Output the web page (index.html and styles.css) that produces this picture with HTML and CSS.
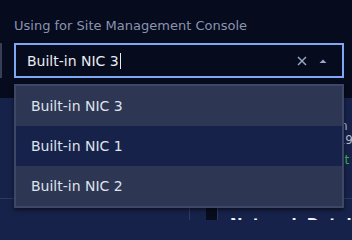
FILE: index.html
```html
<!DOCTYPE html>
<html>
<head>
<meta charset="utf-8">
<link rel="stylesheet" href="styles.css">
</head>
<body>
<div class="app">
  <header class="top">
    <div class="form-row">
      <div class="stub"></div>
      <div class="field">
        <label class="label">Using for Site Management Console</label>
        <div class="select">
          <span class="value">Built-in NIC 3</span><span class="caret"></span>
          <span class="spacer"></span>
          <svg class="clear" width="10" height="10" viewBox="0 0 10 10"><path d="M1 1 L9 9 M9 1 L1 9" stroke="#9aa5c3" stroke-width="1.5" fill="none"/></svg>
          <svg class="arrow" width="8" height="4" viewBox="0 0 8 4"><polygon points="0.5,4 4,0.5 7.5,4" fill="#9aa5c3"/></svg>
        </div>
        <ul class="menu">
          <li class="item active">Built-in NIC 3</li>
          <li class="item">Built-in NIC 1</li>
          <li class="item active">Built-in NIC 2</li>
        </ul>
      </div>
    </div>
  </header>
  <main class="lower">
    <div class="info">
      <div class="line">Lin</div>
      <div class="line">219</div>
      <div class="line ok">Act</div>
    </div>
    <div class="divider"></div>
    <div class="cols">
      <div class="col col-a"><div class="block"></div></div>
      <div class="col col-b"><h2 class="heading">Network Details</h2></div>
    </div>
  </main>
</div>
</body>
</html>
```
FILE: styles.css
```css
html, body {
  margin: 0;
  padding: 0;
  height: 220px;
  overflow: hidden;
}
body {
  background: #17224a;
  font-family: "DejaVu Sans", sans-serif;
}
.app {
  width: 352px;
  height: 220px;
  overflow: hidden;
  display: flex;
  flex-direction: column;
}
.top {
  flex: none;
  height: 98px;
  box-sizing: border-box;
  background: #060b1d;
  padding: 18px 8px 0 0;
}
.form-row {
  display: flex;
  align-items: flex-end;
}
.stub {
  width: 2px;
  height: 35px;
  background: #363f57;
  margin-right: 12px;
  flex: none;
}
.field {
  flex: 1;
  position: relative;
  display: flex;
  flex-direction: column;
}
.label {
  font-size: 13px;
  line-height: 16px;
  color: #8a94b0;
  margin-bottom: 9px;
}
.select {
  height: 35px;
  box-sizing: border-box;
  border: 2px solid #80a7f2;
  background: #060b1d;
  display: flex;
  align-items: center;
  padding: 0 15px 0 11px;
}
.value {
  font-size: 14px;
  color: #e8ebf2;
}
.caret {
  width: 1px;
  height: 16px;
  background: #e8ebf2;
  margin-left: 1px;
}
.spacer {
  flex: 1;
}
.clear {
  margin-right: 12px;
}
.arrow {
  margin-top: 1px;
}
.menu {
  position: absolute;
  left: 0;
  right: 0;
  top: 66px;
  margin: 0;
  padding: 0;
  list-style: none;
  border: 2px solid #3d4868;
  background: #17224a;
  box-shadow: 0 2px 4px rgba(0, 0, 0, 0.55);
  z-index: 2;
}
.item {
  height: 40px;
  display: flex;
  align-items: center;
  padding-left: 15px;
  font-size: 14px;
  color: #dfe3ec;
}
.item.active {
  background: #2d3653;
}
.lower {
  flex: 1;
  min-height: 0;
  overflow: hidden;
  display: flex;
  flex-direction: column;
}
.info {
  flex: none;
  padding: 21px 0 0 330px;
  font-size: 12px;
  line-height: 14px;
  color: #b4bccf;
  white-space: nowrap;
}
.line.ok {
  margin-top: 6px;
  color: #3cb44a;
}
.divider {
  flex: none;
  height: 1px;
  background: #2d3963;
  margin-top: 31px;
}
.cols {
  flex: 1;
  min-height: 0;
  overflow: hidden;
  display: flex;
  padding-left: 189px;
}
.col {
  border-left: 1px solid #2d3963;
}
.col-a {
  width: 44px;
  display: flex;
  padding-left: 16px;
}
.block {
  width: 11px;
  background: #070d1f;
}
.col-b {
  padding: 17px 0 0 12px;
  white-space: nowrap;
}
.heading {
  margin: 0;
  font-size: 15px;
  line-height: 18px;
  font-weight: bold;
  color: #f2f4f8;
}
```
